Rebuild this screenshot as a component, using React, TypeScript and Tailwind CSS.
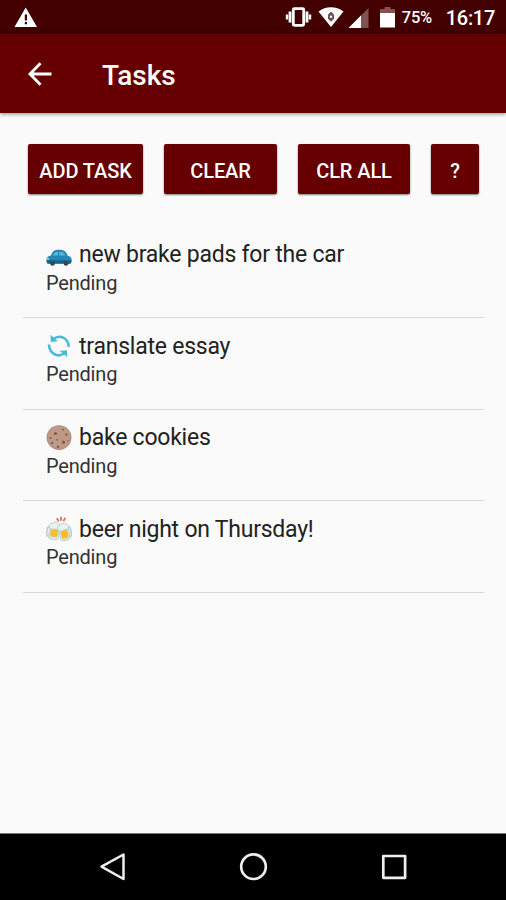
import type { ReactNode } from 'react';

interface Task {
  id: number;
  title: string;
  status: string;
  icon: ReactNode;
}

const CarIcon = () => (
  <svg width="26" height="26" viewBox="0 0 26 26">
    <path d="M5 13.500C6.500 9 8 7.700 13 7.700s7 1.500 8.500 5.800c3 .7 4.200 2.200 4.200 4.500 0 2.300-.6 3.700-2 3.700H2.300C1 21.700.4 20.200.4 18.200c0-2.600 1.600-4.200 4.600-4.700z" fill="#2487b8" />
    <path d="M6.800 13.500c.9-2.600 2.200-3.700 5.200-3.800v3.800zM13.200 9.700c3.300 0 4.800 1 6.300 3.800h-6.300z" fill="#56b6de" />
    <path d="M.6 18.200h24.900l-.8 3.200H1.400z" fill="#126594" />
    <circle cx="6.500" cy="21.400" r="2.400" fill="#3d464d" />
    <circle cx="20" cy="21.400" r="2.400" fill="#3d464d" />
    <circle cx="2" cy="17" r=".9" fill="#d9dcae" />
  </svg>
);

const ArrowsIcon = () => (
  <svg width="26" height="26" viewBox="0 0 26 26">
    <g fill="none" stroke="#4abada" strokeWidth="2.600">
      <path d="M7.500 6C13.500 1.200 22.200 4.500 22.800 13.800" />
      <path d="M3 11.500C3.300 20.500 11.500 25 18 20.500" />
    </g>
    <g fill="#4abada">
      <path d="M4.500 1.800L6.800 3.800 8.800 5.800 12 8.200 4.800 9z" />
      <path d="M21.200 24.200L18.900 22.200 16.900 20.200 13.500 18 21 17.300z" />
    </g>
  </svg>
);

const CookieIcon = () => (
  <svg width="26" height="26" viewBox="0 0 26 26">
    <circle cx="13" cy="12.600" r="12.400" fill="#ab8978" />
    <circle cx="13" cy="12.300" r="11.500" fill="#bd9986" />
    <g fill="#89594d">
      <circle cx="9.500" cy="8.500" r="1.600" />
      <circle cx="17" cy="4.800" r="1" />
      <circle cx="20.500" cy="9.500" r="1.200" />
      <circle cx="4.500" cy="13" r="1" />
      <circle cx="11" cy="14.800" r=".9" />
      <circle cx="17.500" cy="17.200" r="1.600" />
      <circle cx="6" cy="18" r="1.200" />
      <circle cx="12" cy="21.700" r="1.200" />
      <circle cx="22" cy="15.700" r=".8" />
    </g>
  </svg>
);

const BeersIcon = () => (
  <svg width="26" height="26" viewBox="0 0 26 26">
    <path d="M10.800 2.200l2 3M15 .8v4M19.300 2L17.400 5" stroke="#e8604c" strokeWidth="1.700" fill="none" />
    <g transform="rotate(8 8 15)">
      <rect x="1" y="11.500" width="5" height="9.500" rx="2.400" fill="none" stroke="#b4cdd5" strokeWidth="1.500" />
      <rect x="3.300" y="8.500" width="10" height="15" rx="2.500" fill="#dce6e4" stroke="#b4cdd5" strokeWidth=".8" />
      <rect x="4.700" y="12.500" width="7.300" height="8.500" rx="2.500" fill="#f6bd2c" />
      <path d="M2.800 12.300c-.8-3.300 1-5.300 3.500-5 1.500-2 4-1.500 5 0 2.500 0 3.300 3 1.800 4.700-1.500 1.500-3 .6-4.500.9-2 .9-4.300.8-5.800-.6z" fill="#eef2ed" stroke="#b4cdd5" strokeWidth=".9" />
    </g>
    <g transform="rotate(-12 18 15)">
      <rect x="20.300" y="12" width="4.500" height="9.500" rx="2.200" fill="none" stroke="#b4cdd5" strokeWidth="1.500" />
      <rect x="13" y="9.500" width="9.800" height="15" rx="2.500" fill="#dce6e4" stroke="#b4cdd5" strokeWidth=".8" />
      <rect x="14.200" y="14" width="7.300" height="8.500" rx="2.500" fill="#f6bd2c" />
      <path d="M12.800 13.500c-1-3 .5-5.500 3.200-5.300 1.500-1.700 4.500-1.400 5.200.3 2.500.5 2.800 3.300 1.200 5-1.500 1-2.900.1-4.400.5-2 .8-3.900.8-5.200-.5z" fill="#eef2ed" stroke="#b4cdd5" strokeWidth=".9" />
    </g>
  </svg>
);

const tasks: Task[] = [
  { id: 1, title: 'new brake pads for the car', status: 'Pending', icon: <CarIcon /> },
  { id: 2, title: 'translate essay', status: 'Pending', icon: <ArrowsIcon /> },
  { id: 3, title: 'bake cookies', status: 'Pending', icon: <CookieIcon /> },
  { id: 4, title: 'beer night on Thursday!', status: 'Pending', icon: <BeersIcon /> },
];

const actions = [
  { label: 'ADD TASK', width: 'w-[115px]' },
  { label: 'CLEAR', width: 'w-[113px]' },
  { label: 'CLR ALL', width: 'w-[112px]' },
  { label: '?', width: 'w-12' },
];

function StatusBar() {
  return (
    <div className="h-[34px] shrink-0 bg-[#420000] flex items-center pl-[14px] pr-[11px] text-white">
      <svg className="-mt-px" width="24" height="22" viewBox="0 0 24 22">
        <path d="M11.700 1.500L23 21H.5z" fill="#fff" />
        <path d="M10.800 8.500h2.200v6h-2.200zM10.800 16h2.200v2.200h-2.200z" fill="#420000" />
      </svg>
      <div className="ml-auto flex items-center">
        {/* vibrate */}
        <svg width="28" height="24" viewBox="0 0 28 24" fill="none" stroke="#fff">
          <rect x="8.300" y="3.700" width="10.400" height="16.600" rx="1" strokeWidth="2.800" />
          <path d="M5 6.500v11M22 6.500v11" strokeWidth="2.800" />
          <path d="M2 9.500v5M25 9.500v5" strokeWidth="2.400" />
        </svg>
        {/* wifi */}
        <svg className="ml-[5px]" width="26" height="24" viewBox="0 0 26 24">
          <path d="M.5 6.500C7.500.8 18.500.8 25.500 6.500L13 22z" fill="#fff" />
          <path d="M13 6.500l3 3v4.300l-3 3-3-3V9.500z" fill="#725050" />
          <circle cx="13" cy="11.800" r="1.200" fill="#fff" />
        </svg>
        {/* mobile signal */}
        <svg className="ml-1 mt-0.5" width="21" height="22" viewBox="0 0 21 22">
          <path d="M20.500 1v20H.5z" fill="#805252" />
          <path d="M13 8.500V21H.5z" fill="#fff" />
        </svg>
        {/* battery */}
        <svg className="ml-[11px] mt-0.5" width="15" height="22" viewBox="0 0 15 22">
          <path d="M4.500 0h6v2H15v5H0V2h4.500z" fill="#805252" />
          <path d="M0 6h15v14.500H0z" fill="#fff" />
        </svg>
        <span className="ml-[7px] w-[32px] text-[16.5px] leading-none font-medium tracking-[-0.2px] whitespace-nowrap pt-[3px]">75%</span>
        <span className="ml-3 text-[20px] leading-none font-medium tracking-[-0.3px] whitespace-nowrap pt-px">16:17</span>
      </div>
    </div>
  );
}

function AppBar() {
  return (
    <header className="relative h-[79px] shrink-0 bg-[#660000] flex items-center pl-[28px] shadow-[0_1px_4px_rgba(0,0,0,0.45)]">
      <svg width="24" height="24" viewBox="0 0 24 24" fill="none" stroke="#fff" strokeWidth="2.900">
        <path d="M12.500 1.200L2 12l10.500 10.800M1.500 12h22" />
      </svg>
      <h1 className="ml-[50px] pt-[4px] text-[28px] leading-8 font-medium text-white">Tasks</h1>
    </header>
  );
}

function NavBar() {
  return (
    <nav className="h-[67px] shrink-0 bg-black border-t border-[#777] flex items-center pl-[99px] text-[#eee]">
      <svg width="28" height="30" viewBox="0 0 28 30" fill="none" stroke="currentColor" strokeWidth="2.500" strokeLinejoin="round">
        <path d="M24.500 2.500v24.500L2.500 14.700z" />
      </svg>
      <svg className="ml-[111px]" width="30" height="30" viewBox="0 0 30 30" fill="none" stroke="currentColor" strokeWidth="2.700">
        <circle cx="15.500" cy="14.700" r="12.300" />
      </svg>
      <svg className="ml-[112px]" width="28" height="30" viewBox="0 0 28 30" fill="none" stroke="currentColor" strokeWidth="2.700" strokeLinejoin="round">
        <rect x="3.300" y="4" width="21.800" height="21.800" />
      </svg>
    </nav>
  );
}

export default function App() {
  return (
    <div className="h-screen flex flex-col bg-[#fafafa] overflow-hidden font-['Roboto',sans-serif]">
      <StatusBar />
      <AppBar />

      <main className="flex-1 pt-[31px] px-[23px]">
        <div className="flex gap-[21px] pl-[5px]">
          {actions.map((action) => (
            <button
              key={action.label}
              className={`${action.width} h-[50px] shrink-0 rounded-[2px] bg-[#660000] text-white text-[20px] leading-none font-medium tracking-[-0.1px] whitespace-nowrap pt-[3px] shadow-[0_1px_2px_rgba(0,0,0,0.5)]`}
            >
              {action.label}
            </button>
          ))}
        </div>

        <ul className="mt-[32.5px] w-[461px]">
          {tasks.map((task) => (
            <li key={task.id} className="h-[91.5px] border-b border-[#d8d8d8] pl-[23px] pt-[13px]">
              <div className="flex items-center h-[30px]">
                {task.icon}
                <span className="ml-[7px] pt-px text-[23px] leading-[30px] tracking-[-0.23px] text-[#212121]">{task.title}</span>
              </div>
              <p className="text-[20px] leading-[26px] tracking-[-0.2px] text-[#333]">{task.status}</p>
            </li>
          ))}
        </ul>
      </main>

      <NavBar />
    </div>
  );
}
